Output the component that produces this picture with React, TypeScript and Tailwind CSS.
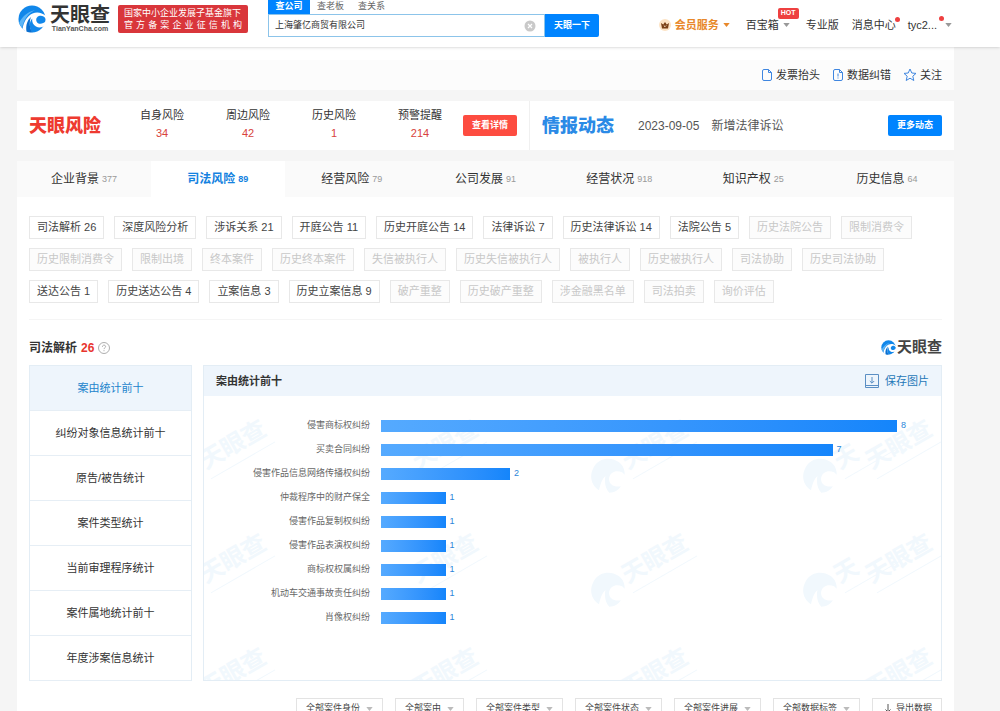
import type { ReactNode } from "react";

const menuTabs = [
  { label: "企业背景", count: 377 },
  { label: "司法风险", count: 89, active: true },
  { label: "经营风险", count: 79 },
  { label: "公司发展", count: 91 },
  { label: "经营状况", count: 918 },
  { label: "知识产权", count: 25 },
  { label: "历史信息", count: 64 },
];

const risks = [
  { label: "自身风险", count: 34 },
  { label: "周边风险", count: 42 },
  { label: "历史风险", count: 1 },
  { label: "预警提醒", count: 214 },
];

const tags: { label: string; empty?: boolean }[] = [
  { label: "司法解析 26" },
  { label: "深度风险分析" },
  { label: "涉诉关系 21" },
  { label: "开庭公告 11" },
  { label: "历史开庭公告 14" },
  { label: "法律诉讼 7" },
  { label: "历史法律诉讼 14" },
  { label: "法院公告 5" },
  { label: "历史法院公告", empty: true },
  { label: "限制消费令", empty: true },
  { label: "历史限制消费令", empty: true },
  { label: "限制出境", empty: true },
  { label: "终本案件", empty: true },
  { label: "历史终本案件", empty: true },
  { label: "失信被执行人", empty: true },
  { label: "历史失信被执行人", empty: true },
  { label: "被执行人", empty: true },
  { label: "历史被执行人", empty: true },
  { label: "司法协助", empty: true },
  { label: "历史司法协助", empty: true },
  { label: "送达公告 1" },
  { label: "历史送达公告 4" },
  { label: "立案信息 3" },
  { label: "历史立案信息 9" },
  { label: "破产重整", empty: true },
  { label: "历史破产重整", empty: true },
  { label: "涉金融黑名单", empty: true },
  { label: "司法拍卖", empty: true },
  { label: "询价评估", empty: true },
];

const statTabs = [
  "案由统计前十",
  "纠纷对象信息统计前十",
  "原告/被告统计",
  "案件类型统计",
  "当前审理程序统计",
  "案件属地统计前十",
  "年度涉案信息统计",
];

const causes = [
  { name: "侵害商标权纠纷", value: 8 },
  { name: "买卖合同纠纷", value: 7 },
  { name: "侵害作品信息网络传播权纠纷", value: 2 },
  { name: "仲裁程序中的财产保全", value: 1 },
  { name: "侵害作品复制权纠纷", value: 1 },
  { name: "侵害作品表演权纠纷", value: 1 },
  { name: "商标权权属纠纷", value: 1 },
  { name: "机动车交通事故责任纠纷", value: 1 },
  { name: "肖像权纠纷", value: 1 },
];
const maxCause = 8;

const filters = [
  "全部案件身份",
  "全部案由",
  "全部案件类型",
  "全部案件状态",
  "全部案件进展",
  "全部数据标签",
];

function LogoMark({ className }: { className?: string }) {
  return (
    <svg viewBox="0 0 28 28" className={className} aria-hidden="true">
      <circle cx="14" cy="14" r="13.500" fill="#1187ea" />
      <path d="M1 18C4 12 9 7 17 5C10 8.500 6 14 4 23Z" fill="#5db5f6" />
      <path
        d="M4.500 24C5.500 17 9 11 14.500 8.500C19 6.600 24 7.500 28 11V14C26 11 23.500 10.200 21 11C17.500 12.200 17.500 16.500 20 18.200C22.500 19.600 25.500 18.500 28 16V20C25 22.500 21 23.200 18 21.500C15 19.800 13.800 17 14.200 13.500C11 17 11 22.500 14.500 28H10Z"
        fill="#fff"
      />
      <path d="M8.500 26.500C7.500 20 9.500 15 13 12C11 17.500 11.500 23 14.500 27.500C12 27.600 10.200 27.300 8.500 26.500Z" fill="#0a6fd0" />
    </svg>
  );
}

function Caret({ className }: { className: string }) {
  return (
    <svg viewBox="0 0 8 5" className={`h-1 w-[7px] shrink-0 ${className}`} aria-hidden="true">
      <path d="M0 0h8L4 5z" fill="currentColor" />
    </svg>
  );
}

function Watermark({ className, text = "天眼查", mark }: { className: string; text?: string; mark?: boolean }) {
  return (
    <div className={`absolute h-[86px] w-[104px] text-[#f1f8fd] ${className}`}>
      {mark && (
        <svg viewBox="0 0 28 28" className="absolute bottom-0 left-0 size-9" aria-hidden="true">
          <path
            d="M22 3C16-1 7 0 3 7C-1 14 1 21 7 25C8 21 9 17 12 14C11 19 12 24 15 27C19 27 22 25 24 22C18 23 14 20 15 15C16 11 20 9 25 11L27 13C27 8 25 5 22 3Z"
            fill="currentColor"
          />
        </svg>
      )}
      <div className="absolute right-0 top-[22px] w-[74px] -rotate-30 font-bold">
        <div className="whitespace-nowrap text-2xl leading-7">{text}</div>
        <div className="mt-1 h-px bg-current" />
      </div>
    </div>
  );
}

function ToolLink({ children }: { children: ReactNode }) {
  return (
    <a href="#" className="flex items-center gap-[3px] text-[11px]">
      {children}
    </a>
  );
}

function Header() {
  return (
    <header className="relative z-10 flex h-[47px] shrink-0 bg-white pl-[18px] pr-12 shadow-sm">
      <a href="#" className="mt-[5px] flex h-7 items-center gap-1">
        <LogoMark className="size-7" />
        <span className="flex w-[60px] flex-col items-center font-bold">
          <span className="text-xl leading-5 text-[#333]">天眼查</span>
          <span className="text-[7px] leading-2 text-[#555]">TianYanCha.com</span>
        </span>
      </a>
      <div className="ml-2 mt-[5px] h-7 w-[130px] shrink-0 rounded-xs bg-[#d9363b] px-[6px] pt-[2px] text-[9px] leading-3 text-white">
        <div className="whitespace-nowrap">国家中小企业发展子基金旗下</div>
        <div className="[text-align-last:justify]">官方备案企业征信机构</div>
      </div>

      <form className="ml-5 w-[331px] shrink-0 text-[9px]" onSubmit={(e) => e.preventDefault()}>
        <div className="flex h-[14px] items-center text-[#666]">
          <button type="button" className="h-full w-[42px] bg-[#0084ff] font-bold text-white">
            查公司
          </button>
          <button type="button" className="w-[41px]">查老板</button>
          <button type="button" className="w-[41px]">查关系</button>
        </div>
        <div className="flex h-[23px]">
          <div className="flex min-w-0 flex-1 items-center border border-[#8cc4ea] pl-[6px] pr-2">
            <input
              type="text"
              aria-label="搜索公司"
              defaultValue="上海肇亿商贸有限公司"
              className="min-w-0 flex-1 text-[#333] outline-none"
            />
            <button type="button" aria-label="清空">
              <svg viewBox="0 0 12 12" className="size-3">
                <circle cx="6" cy="6" r="5.500" fill="#c9c9c9" />
                <path d="M4 4l4 4M8 4l-4 4" stroke="#fff" strokeWidth="1.200" />
              </svg>
            </button>
          </div>
          <button type="submit" className="w-[54px] rounded-r-xs bg-[#0084ff] font-bold text-white">
            天眼一下
          </button>
        </div>
      </form>

      <nav className="ml-auto mt-4 flex h-[18px] items-center text-[11px] text-[#333]">
        <button className="flex items-center font-bold text-[#e8882a]">
          <svg viewBox="0 0 12 12" className="mr-1 size-3" aria-hidden="true">
            <circle cx="6" cy="6" r="6" fill="#fde3c4" />
            <path d="M2 4l2.200 1.600L6 3l1.800 2.600L10 4l-1 5.500H3z" fill="#7a4016" />
            <path d="M4.800 6.500L6 7.700l1.200-1.200" stroke="#fde3c4" fill="none" />
          </svg>
          会员服务
          <Caret className="ml-1 text-[#e8882a]" />
        </button>
        <button className="relative ml-4 flex items-center">
          百宝箱
          <Caret className="ml-1 text-[#999]" />
          <span className="absolute -top-[9px] left-8 flex h-[11px] w-[21px] items-center justify-center rounded-xs bg-[#ee4040] text-[7px] font-bold text-white">
            HOT
          </span>
        </button>
        <a href="#" className="ml-4">专业版</a>
        <a href="#" className="relative ml-[13px]">
          消息中心
          <span className="absolute -right-1 top-0 size-[5px] rounded-full bg-[#ee4040]" />
        </a>
        <button className="relative ml-3 flex items-center">
          tyc2...
          <Caret className="ml-2 text-[#999]" />
          <span className="absolute right-2 -top-px size-[5px] rounded-full bg-[#ee4040]" />
        </button>
      </nav>
    </header>
  );
}

function RiskCard() {
  return (
    <section className="mt-[11px] flex h-[49px] items-center bg-white pl-3 pr-3">
      <h2 className="w-[90px] whitespace-nowrap text-lg font-black text-[#ee3a30]">天眼风险</h2>
      <div className="flex">
        {risks.map((risk) => (
          <a key={risk.label} href="#" className="w-[86px] pb-1 text-center text-[11px] leading-[18px]">
            <div className="text-[#333]">{risk.label}</div>
            <div className="text-[#d8433c]">{risk.count}</div>
          </a>
        ))}
      </div>
      <button className="h-[21px] w-[54px] shrink-0 rounded-xs bg-[#fd4c40] text-[9px] font-bold text-white">
        查看详情
      </button>
      <div className="ml-3 flex h-full flex-1 items-center border-l border-[#f0f0f0] pl-3">
        <h2 className="whitespace-nowrap text-lg font-black text-[#2b8ae6]">情报动态</h2>
        <div className="ml-6 flex gap-3 whitespace-nowrap text-xs text-[#555]">
          <time>2023-09-05</time>
          <span>新增法律诉讼</span>
        </div>
        <button className="ml-auto h-[21px] w-[54px] rounded-xs bg-[#0084ff] text-[9px] font-bold text-white">
          更多动态
        </button>
      </div>
    </section>
  );
}

function CauseChart() {
  return (
    <section className="relative flex-1 overflow-hidden border border-[#e3edf5]">
      <div className="absolute inset-0" aria-hidden="true">
        <Watermark className="-left-9 top-[42px]" />
        <Watermark className="left-[176px] top-[42px]" />
        <Watermark className="left-[386px] top-[42px]" mark />
        <Watermark className="left-[598px] top-[42px]" text="天" mark />
        <Watermark className="left-[630px] top-[42px]" />
        <Watermark className="-left-9 top-[156px]" />
        <Watermark className="left-[176px] top-[156px]" />
        <Watermark className="left-[386px] top-[156px]" mark />
        <Watermark className="left-[598px] top-[156px]" text="天" mark />
        <Watermark className="left-[630px] top-[156px]" />
        <Watermark className="-left-9 top-[270px]" />
        <Watermark className="left-[176px] top-[270px]" />
        <Watermark className="left-[386px] top-[270px]" />
        <Watermark className="left-[630px] top-[270px]" />
      </div>
      <div className="relative flex h-[30px] items-center justify-between bg-[#eef5fc] px-3 text-[11px]">
        <h3 className="font-bold text-[#333]">案由统计前十</h3>
        <button className="flex items-center gap-[6px] text-[#1f78b8]">
          <svg viewBox="0 0 14 14" className="size-[14px]" fill="none" stroke="#5b8fc4" aria-hidden="true">
            <path d="M.5.5h13v13H.5zM.5 11.500h13M7 3v6M4.800 7L7 9.200 9.200 7" />
          </svg>
          保存图片
        </button>
      </div>
      <div className="relative pr-11 pt-[18px]">
        {causes.map((cause) => (
          <div key={cause.name} className="flex h-6 items-center text-[9px]">
            <span className="w-[166px] shrink-0 text-right text-[#666]">{cause.name}</span>
            <div className="ml-[11px] flex flex-1 items-center gap-1">
              <div
                className="h-3 shrink-0 bg-linear-to-r from-[#55aaff] to-[#1485fb]"
                style={{ width: `${(cause.value / maxCause) * 100}%` }}
              />
              <span className="text-[#2b86d9]">{cause.value}</span>
            </div>
          </div>
        ))}
      </div>
    </section>
  );
}

export default function App() {
  return (
    <div className="flex h-screen flex-col bg-[#f5f5f5] font-['Liberation_Sans','Noto_Sans_CJK_SC',sans-serif] text-[#333]">
      <Header />

      <main className="min-h-0 flex-1 overflow-y-auto pl-[17px] pr-[46px] [scrollbar-width:none]">
        <div className="h-[13px] bg-white" />
        <div className="flex h-[30px] items-center justify-end gap-3 bg-[#fcfcfc] pr-3">
          <ToolLink>
            <svg viewBox="0 0 12 12" className="size-3" fill="none" stroke="#3f86e0" aria-hidden="true">
              <path d="M3 .5h4.500l3 3V10a1.500 1.500 0 0 1-1.500 1.500H3A1.500 1.500 0 0 1 1.500 10V2A1.500 1.500 0 0 1 3 .5zM7.500.5v3h3" />
            </svg>
            发票抬头
          </ToolLink>
          <ToolLink>
            <svg viewBox="0 0 12 12" className="size-3" fill="none" stroke="#3f86e0" aria-hidden="true">
              <path d="M3 .5h4.500l3 3V10a1.500 1.500 0 0 1-1.500 1.500H3A1.500 1.500 0 0 1 1.500 10V2A1.500 1.500 0 0 1 3 .5zM7.500.5v3h3M6 4.500v3M6 8.500v1" />
            </svg>
            数据纠错
          </ToolLink>
          <ToolLink>
            <svg viewBox="0 0 14 14" className="size-[14px]" fill="none" stroke="#3f86e0" aria-hidden="true">
              <path d="M7 1l1.800 4 4.200.4-3.200 2.800 1 4.300L7 10.200l-3.800 2.300 1-4.300L1 5.400 5.200 5z" />
            </svg>
            关注
          </ToolLink>
        </div>

        <RiskCard />

        <nav className="mt-[11px] flex h-9 bg-[#fafafa]">
          {menuTabs.map((tab) => (
            <a
              key={tab.label}
              href="#"
              className={`flex flex-1 items-center justify-center gap-[3px] text-xs ${
                tab.active ? "bg-white font-bold text-[#1482e0]" : "text-[#333]"
              }`}
            >
              {tab.label}
              <span className={`text-[9px] ${tab.active ? "" : "text-[#999]"}`}>{tab.count}</span>
            </a>
          ))}
        </nav>

        <div className="bg-white px-3 pb-8 pt-[19px]">
          <div className="flex flex-wrap gap-x-[10px] gap-y-[9px]">
            {tags.map((tag) => (
              <button
                key={tag.label}
                disabled={tag.empty}
                className={`h-[23px] whitespace-nowrap border border-[#e8e8e8] px-[7px] text-[11px] ${
                  tag.empty ? "bg-[#fcfcfc] text-[#c8c8c8]" : "text-[#444]"
                }`}
              >
                {tag.label}
              </button>
            ))}
          </div>

          <div className="mt-4 flex h-[46px] items-center border-t border-[#f5f5f5] pt-[10px]">
            <h2 className="flex items-center gap-1 text-xs font-bold">
              司法解析 <span className="text-[#e8352e]">26</span>
              <svg viewBox="0 0 12 12" className="size-3" fill="none" stroke="#999" aria-hidden="true">
                <circle cx="6" cy="6" r="5.500" strokeWidth=".8" />
                <path d="M4.400 4.800c0-2.200 3.200-2.200 3.200-.2 0 1.200-1.600 1.300-1.600 2.500M6 8.200v1" strokeWidth=".8" />
              </svg>
            </h2>
            <div className="ml-auto flex items-center gap-px text-[15px] font-bold text-[#444]">
              <LogoMark className="size-[15px]" />
              天眼查
            </div>
          </div>

          <div className="flex gap-[11px]">
            <div className="flex w-[163px] shrink-0 flex-col border border-b-0 border-[#e3edf5]">
              {statTabs.map((label, i) => (
                <button
                  key={label}
                  className={`h-[45px] border-b border-[#e6eef5] text-[11px] ${
                    i === 0 ? "bg-[#eef5fc] text-[#2384cc]" : "text-[#333]"
                  }`}
                >
                  {label}
                </button>
              ))}
            </div>
            <CauseChart />
          </div>

          <div className="mt-[17px] flex justify-end gap-3 text-[9px] text-[#444]">
            {filters.map((label) => (
              <div key={label} className="relative">
                <select
                  aria-label={label}
                  className="h-[22px] appearance-none border border-[#e3e3e3] bg-white pl-[9px] pr-[21px]"
                >
                  <option>{label}</option>
                </select>
                <Caret className="pointer-events-none absolute right-[10px] top-[9px] text-[#bbb]" />
              </div>
            ))}
            <button className="flex h-[22px] items-center gap-[2px] border border-[#e3e3e3] px-[9px]">
              <svg viewBox="0 0 12 12" className="size-3" fill="none" stroke="#555" aria-hidden="true">
                <path d="M6 1v8M3.500 6.500L6 9l2.500-2.500M1 9v2h10V9" />
              </svg>
              导出数据
            </button>
          </div>
        </div>
      </main>
    </div>
  );
}
